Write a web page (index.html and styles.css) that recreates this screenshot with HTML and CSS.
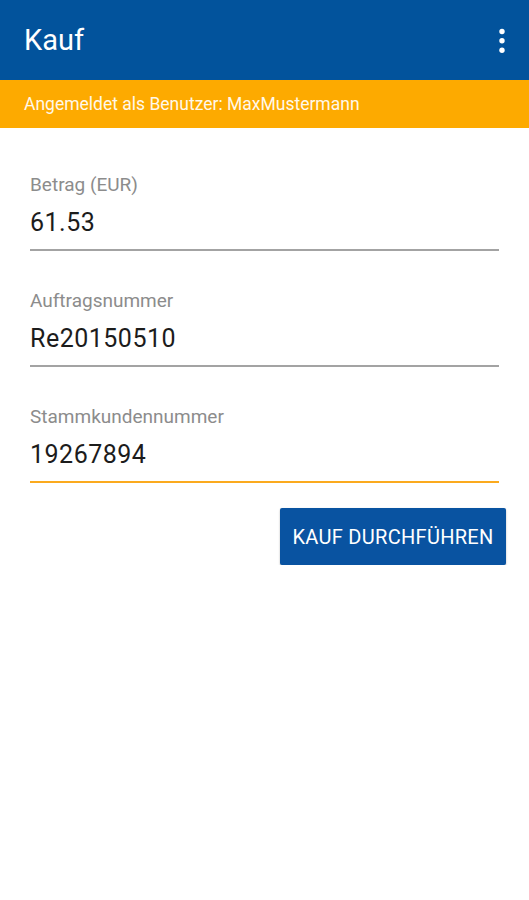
FILE: index.html
```html
<!DOCTYPE html>
<html>

	<head>
		<meta charset="utf-8">
		<title>Kauf</title>
		<link rel="stylesheet" href="styles.css">
	</head>

	<body>
		<div class="toolbar">
			<div class="title">Kauf</div>
			<svg class="menu" width="8" height="26" viewBox="0 0 8 26">
				<circle cx="4" cy="3.5" r="2.7" fill="#fff"/>
				<circle cx="4" cy="12.8" r="2.7" fill="#fff"/>
				<circle cx="4" cy="22.2" r="2.7" fill="#fff"/>
			</svg>
		</div>
		<div class="banner">Angemeldet als Benutzer: MaxMustermann</div>

		<div class="form">
			<div class="field">
				<div class="label">Betrag (EUR)</div>
				<div class="value">61.53</div>
			</div>
			<div class="field">
				<div class="label">Auftragsnummer</div>
				<div class="value">Re20150510</div>
			</div>
			<div class="field active">
				<div class="label">Stammkundennummer</div>
				<div class="value">19267894</div>
			</div>
		</div>
		<div class="actions">
			<button class="btn">KAUF DURCHFÜHREN</button>
		</div>
	</body>

</html>
```

FILE: styles.css
```css
body {
	margin: 0;
	background: #fff;
	font-family: Roboto, "Liberation Sans", sans-serif;
}
.toolbar {
	height: 80px;
	background: #02539c;
	display: flex;
	align-items: center;
	justify-content: space-between;
	padding: 0 23px 0 24px;
}
.title {
	color: #fff;
	font-size: 29px;
}
.menu {
	display: block;
	margin-top: 1px;
}
.banner {
	height: 48px;
	background: #fdaa00;
	color: #fff8ea;
	font-size: 17.5px;
	display: flex;
	align-items: center;
	padding-left: 24px;
}
.form {
	padding: 46px 30px 0 30px;
}
.field {
	margin-bottom: 39px;
	padding-bottom: 11px;
	border-bottom: 2px solid #a3a3a3;
}
.field:last-child {
	margin-bottom: 0;
}
.field.active {
	border-bottom-color: #fbaa1e;
}
.label {
	color: #8c8c8c;
	font-size: 19px;
	line-height: 22px;
}
.value {
	color: #1c1c1c;
	font-size: 25px;
	line-height: 30px;
	letter-spacing: 0.5px;
	margin-top: 12px;
}
.actions {
	display: flex;
	justify-content: flex-end;
	padding: 25px 23px 0 0;
}
.btn {
	width: 226px;
	height: 57px;
	border: 0;
	border-radius: 2px;
	background: #0953a1;
	color: #fff;
	font-family: Roboto, "Liberation Sans", sans-serif;
	font-size: 20px;
	letter-spacing: 0.3px;
	box-shadow: 0 1px 2px rgba(0, 0, 0, 0.3);
}
```
